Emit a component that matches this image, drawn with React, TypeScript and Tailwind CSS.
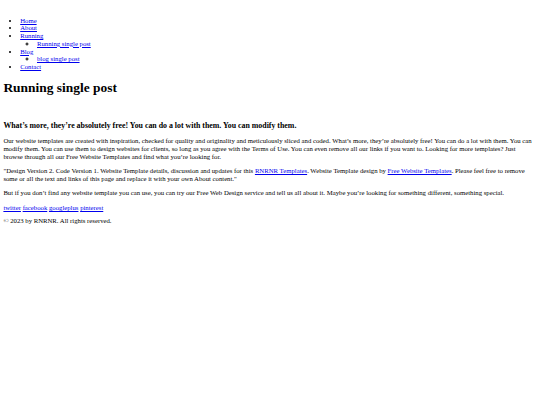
const link = "text-[#0000ee] underline"

export default function App() {
  return (
    <div
      className="min-h-[405px] bg-white p-[3.4px] pt-[10px] text-[6.72px] leading-[1.15] text-black"
      style={{ fontFamily: '"Liberation Serif", "Times New Roman", serif' }}
    >
      <ul className="my-[6.7px] list-disc pl-[16.8px]">
        <li><a href="#" className={link}>Home</a></li>
        <li><a href="#" className={link}>About</a></li>
        <li>
          <a href="#" className={link}>Running</a>
          <ul className="list-[circle] pl-[16.8px]">
            <li><a href="#" className={link}>Running single post</a></li>
          </ul>
        </li>
        <li>
          <a href="#" className={link}>Blog</a>
          <ul className="list-[circle] pl-[16.8px]">
            <li><a href="#" className={link}>blog single post</a></li>
          </ul>
        </li>
        <li><a href="#" className={link}>Contact</a></li>
      </ul>

      <h1 className="my-[9px] text-[13.44px] font-bold">Running single post</h1>

      <h3 className="mt-[26px] mb-[7px] text-[7.86px] font-bold">
        What’s more, they’re absolutely free! You can do a lot with them. You can modify them.
      </h3>
      <p className="my-[6px] leading-[8px]">
        Our website templates are created with inspiration, checked for quality and originality and meticulously sliced and coded. What’s more, they’re absolutely free! You can do a lot with them. You can modify them. You can use them to design websites for clients, so long as you agree with the Terms of Use. You can even remove all our links if you want to. Looking for more templates? Just browse through all our Free Website Templates and find what you’re looking for.
      </p>
      <p className="my-[6px] leading-[8px]">
        "Design Version 2. Code Version 1. Website Template details, discussion and updates for this{" "}
        <a href="#" className={link}>RNRNR Templates</a>. Website Template design by{" "}
        <a href="#" className={link}>Free Website Templates</a>. Please feel free to remove some or all the text and links of this page and replace it with your own About content."
      </p>
      <p className="my-[6px] leading-[8px]">
        But if you don’t find any website template you can use, you can try our Free Web Design service and tell us all about it. Maybe you’re looking for something different, something special.
      </p>

      <div className="mt-[7px] mb-[5px] leading-[8px]">
        <a href="#" className={link}>twitter</a>{" "}
        <a href="#" className={link}>facebook</a>{" "}
        <a href="#" className={link}>googleplus</a>{" "}
        <a href="#" className={link}>pinterest</a>
      </div>
      <p className="my-[5px] leading-[8px]">© 2023 by RNRNR. All rights reserved.</p>
    </div>
  )
}
